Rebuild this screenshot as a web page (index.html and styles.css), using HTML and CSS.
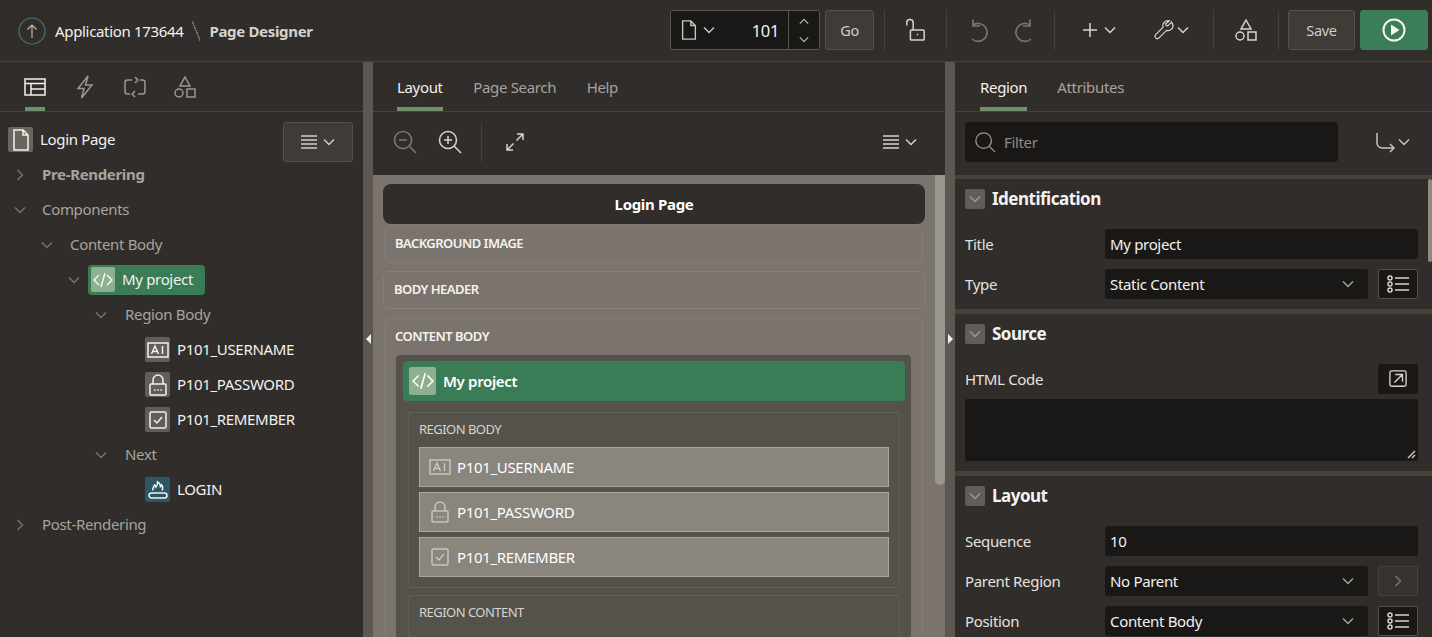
FILE: index.html
```html
<!DOCTYPE html>
<html lang="en">
<head>
  <meta charset="UTF-8" />
  <title>Page Designer</title>
  <link rel="stylesheet" href="styles.css">
</head>
<body>
  <svg class="defs" width="0" height="0">
    <symbol id="chev" viewBox="0 0 12 8"><path d="M1 1.500 6 6.500 11 1.500"/></symbol>
    <symbol id="chev-r" viewBox="0 0 8 12"><path d="M1.500 1 6.500 6 1.500 11"/></symbol>
    <symbol id="lines" viewBox="0 0 16 14"><path d="M0 1h16M0 5h16M0 9h16M0 13h16"/></symbol>
    <symbol id="doc" viewBox="0 0 16 22"><path d="M1 1h9l5 5v15H1zM10 1v5h5"/></symbol>
    <symbol id="shapes" viewBox="0 0 22 22"><path d="M11 1 16 10H6zM13 13h8v8h-8z"/><circle cx="5" cy="17" r="4"/></symbol>
    <symbol id="code" viewBox="0 0 20 16"><path d="M6 3 1 8l5 5M14 3l5 5-5 5M12 1 8 15"/></symbol>
    <symbol id="text-item" viewBox="0 0 22 18"><path d="M1 2h20v14H1z"/><path d="M4.500 13 8 5l3.500 8M5.700 10.500h4.600M15.500 5v8"/></symbol>
    <symbol id="lock-item" viewBox="0 0 18 22"><path d="M2 10h14a1 1 0 0 1 1 1v9a1 1 0 0 1-1 1H2a1 1 0 0 1-1-1v-9a1 1 0 0 1 1-1zM4 10V6a5 5 0 0 1 10 0v4M5 16h1.500M8.300 16h1.500M11.500 16h1.500"/></symbol>
    <symbol id="check-item" viewBox="0 0 18 18"><path d="M2.500 1h13A1.500 1.500 0 0 1 17 2.500v13a1.500 1.500 0 0 1-1.500 1.500h-13A1.500 1.500 0 0 1 1 15.500v-13A1.500 1.500 0 0 1 2.500 1zM5 9l3 3 5-6"/></symbol>
    <symbol id="list" viewBox="0 0 22 18"><circle cx="3" cy="3" r="2"/><circle cx="3" cy="9" r="2"/><circle cx="3" cy="15" r="2"/><path d="M8 3h14M8 9h14M8 15h14"/></symbol>
  </svg>

  <header class="topbar">
    <div class="crumbs">
      <svg class="up-icon" width="28" height="28" viewBox="0 0 28 28"><circle class="up-ring" cx="14" cy="14" r="13"/><path class="up-arrow" d="M14 21V8M9.500 12.500 14 8l4.500 4.500"/></svg>
      <span class="crumb">Application 173644</span>
      <span class="crumb-sep"></span>
      <span class="crumb-now">Page Designer</span>
    </div>
    <div class="tools">
      <div class="page-picker">
        <svg class="ic-doc" width="16" height="20"><use href="#doc"/></svg>
        <svg class="ic-chev" width="12" height="8"><use href="#chev"/></svg>
        <span class="page-no">101</span>
        <span class="stepper">
          <svg class="ic-chev flip" width="10" height="7"><use href="#chev"/></svg>
          <svg class="ic-chev" width="10" height="7"><use href="#chev"/></svg>
        </span>
      </div>
      <button class="btn btn-go">Go</button>
      <span class="vsep sep-a"></span>
      <svg class="tool-lock" width="22" height="24" viewBox="0 0 24 26"><path d="M8 13h13a1 1 0 0 1 1 1v9a1 1 0 0 1-1 1H8a1 1 0 0 1-1-1v-9a1 1 0 0 1 1-1zM3 8V5a3.500 3.500 0 0 1 7 0v8"/><path d="M14 18h1.500"/></svg>
      <span class="vsep sep-b"></span>
      <svg class="tool-dim undo" width="22" height="24" viewBox="0 0 22 24"><path d="M6 7a9 9 0 1 1-1 14M6 1.500V8h7"/></svg>
      <svg class="tool-dim redo" width="22" height="24" viewBox="0 0 22 24"><path d="M16 7a9 9 0 1 0 1 14M16 1.500V8H9"/></svg>
      <span class="vsep sep-c"></span>
      <span class="tool-group plus">
        <svg width="16" height="16" viewBox="0 0 16 16"><path d="M8 1v14M1 8h14"/></svg>
        <svg class="ic-chev" width="12" height="8"><use href="#chev"/></svg>
      </span>
      <span class="tool-group wrench">
        <svg width="20" height="20" viewBox="0 0 24 24"><path d="M21 2.500 16.500 7l-2-.5-.5-2L18.500 1a6 6 0 0 0-7.500 7.500L2 17.500a2.800 2.800 0 0 0 4 4l9-9A6 6 0 0 0 22.500 5z"/></svg>
        <svg class="ic-chev" width="12" height="8"><use href="#chev"/></svg>
      </span>
      <span class="vsep sep-d"></span>
      <svg class="tool-shapes" width="22" height="22"><use href="#shapes"/></svg>
      <span class="vsep sep-e"></span>
      <button class="btn btn-save">Save</button>
      <button class="btn btn-run"><svg width="24" height="24" viewBox="0 0 24 24"><circle cx="12" cy="12" r="10.500"/><path class="run-tri" d="M9 6.500 17.500 12 9 17.500z"/></svg></button>
    </div>
  </header>

  <main class="designer">
    <section class="pane pane-left">
      <nav class="tabs tabs-icons">
        <span class="icon-tab active"><svg width="22" height="18" viewBox="0 0 22 18"><path d="M1 1h20v16H1zM1 5.500h20M7 5.500V17M7 11h14"/></svg></span>
        <span class="icon-tab"><svg width="18" height="24" viewBox="0 0 18 24"><path d="M12 1 2 13.500h6L5.500 23 16 10h-6.500z"/></svg></span>
        <span class="icon-tab"><svg width="24" height="22" viewBox="0 0 24 22"><path d="M9 4H4.500A2.500 2.500 0 0 0 2 6.500v9A2.500 2.500 0 0 0 4.500 18H7M15 18h4.500a2.500 2.500 0 0 0 2.500-2.500v-9A2.500 2.500 0 0 0 19.500 4H17M12 1 15 4 12 7M12 15 9 18 12 21"/></svg></span>
        <span class="icon-tab"><svg width="22" height="22"><use href="#shapes"/></svg></span>
      </nav>
      <div class="tree">
        <div class="tree-row root">
          <span class="node-icon page-icon"><svg width="16" height="22"><use href="#doc"/></svg></span>
          <span class="tree-text strong-white">Login Page</span>
          <button class="btn menu-btn">
            <svg width="16" height="14"><use href="#lines"/></svg>
            <svg class="ic-chev" width="12" height="8"><use href="#chev"/></svg>
          </button>
        </div>
        <div class="tree-row lvl-0"><svg class="toggle" width="8" height="12"><use href="#chev-r"/></svg><span class="tree-text bold">Pre-Rendering</span></div>
        <div class="tree-row lvl-0"><svg class="toggle" width="12" height="8"><use href="#chev"/></svg><span class="tree-text">Components</span></div>
        <div class="tree-row lvl-1"><svg class="toggle" width="12" height="8"><use href="#chev"/></svg><span class="tree-text">Content Body</span></div>
        <div class="tree-row lvl-2">
          <svg class="toggle" width="12" height="8"><use href="#chev"/></svg>
          <span class="pill"><span class="pill-icon"><svg width="20" height="16"><use href="#code"/></svg></span><span class="tree-text strong-white">My project</span></span>
        </div>
        <div class="tree-row lvl-3"><svg class="toggle" width="12" height="8"><use href="#chev"/></svg><span class="tree-text">Region Body</span></div>
        <div class="tree-row leaf">
          <span class="node-icon"><svg width="22" height="18"><use href="#text-item"/></svg></span><span class="tree-text strong-white">P101_USERNAME</span>
        </div>
        <div class="tree-row leaf">
          <span class="node-icon"><svg width="18" height="22"><use href="#lock-item"/></svg></span><span class="tree-text strong-white">P101_PASSWORD</span>
        </div>
        <div class="tree-row leaf">
          <span class="node-icon"><svg width="18" height="18"><use href="#check-item"/></svg></span><span class="tree-text strong-white">P101_REMEMBER</span>
        </div>
        <div class="tree-row lvl-3"><svg class="toggle" width="12" height="8"><use href="#chev"/></svg><span class="tree-text">Next</span></div>
        <div class="tree-row leaf">
          <span class="node-icon teal"><svg width="20" height="20" viewBox="0 0 20 20"><path d="M3.500 13h13a2.500 2.500 0 0 1 0 5h-13a2.500 2.500 0 0 1 0-5zM5 10.500C4 8 6 7 6.500 5c1 .5 1.500 1 1.500 2C9 6 9.500 4 9.500 2c2 1 3 3 3 4.500.5-.5 1-1 1.200-1.500 1 1.500 1.500 3.500.3 5.500"/></svg></span><span class="tree-text strong-white">LOGIN</span>
        </div>
        <div class="tree-row lvl-0"><svg class="toggle" width="8" height="12"><use href="#chev-r"/></svg><span class="tree-text">Post-Rendering</span></div>
      </div>
    </section>

    <div class="splitter"><span class="handle handle-left"></span></div>

    <section class="pane pane-center">
      <nav class="tabs text-tabs center-tabs">
        <span class="text-tab active">Layout</span>
        <span class="text-tab">Page Search</span>
        <span class="text-tab">Help</span>
      </nav>
      <div class="center-tools">
        <svg class="tool-dim" width="24" height="24" viewBox="0 0 24 24"><circle cx="10" cy="10" r="8.500"/><path d="M16 16l7 7M6 10h8"/></svg>
        <svg class="zoom-in" width="24" height="24" viewBox="0 0 24 24"><circle cx="10" cy="10" r="8.500"/><path d="M16 16l7 7M6 10h8M10 6v8"/></svg>
        <span class="vsep tall"></span>
        <svg class="expand" width="20" height="20" viewBox="0 0 20 20"><path d="M12 2h6v6M18 2l-6.500 6.500M2 12v6h6M2 18l6.500-6.500"/></svg>
        <span class="center-menu">
          <svg width="16" height="14"><use href="#lines"/></svg>
          <svg class="ic-chev" width="12" height="8"><use href="#chev"/></svg>
        </span>
      </div>
      <div class="canvas">
        <div class="canvas-inner">
          <div class="page-title">Login Page</div>
          <div class="slot slot-bg">BACKGROUND IMAGE</div>
          <div class="slot slot-header">BODY HEADER</div>
          <div class="slot slot-content">
            <div class="slot-label">CONTENT BODY</div>
            <div class="region">
              <div class="region-head"><span class="region-icon"><svg width="22" height="18"><use href="#code"/></svg></span>My project</div>
              <div class="sub-slot">
                <div class="sub-label">REGION BODY</div>
                <div class="item"><svg width="22" height="18"><use href="#text-item"/></svg><span>P101_USERNAME</span></div>
                <div class="item"><svg width="18" height="22"><use href="#lock-item"/></svg><span>P101_PASSWORD</span></div>
                <div class="item"><svg width="18" height="18"><use href="#check-item"/></svg><span>P101_REMEMBER</span></div>
              </div>
              <div class="sub-slot sub-content">
                <div class="sub-label">REGION CONTENT</div>
              </div>
            </div>
          </div>
        </div>
        <div class="canvas-scroll"><span class="canvas-thumb"></span></div>
      </div>
    </section>

    <div class="splitter"><span class="handle handle-right"></span></div>

    <section class="pane pane-right">
      <nav class="tabs text-tabs right-tabs">
        <span class="text-tab active">Region</span>
        <span class="text-tab">Attributes</span>
      </nav>
      <div class="filter-row">
        <div class="filter">
          <svg width="22" height="22" viewBox="0 0 24 24"><circle cx="10.500" cy="10.500" r="8.500"/><path d="M16.500 16.500 23 23"/></svg>
          <span>Filter</span>
        </div>
        <span class="filter-go">
          <svg width="20" height="20" viewBox="0 0 20 20"><path d="M2 1v10a5 5 0 0 0 5 5h12M15 12l4 4-4 4"/></svg>
          <svg class="ic-chev" width="12" height="8"><use href="#chev"/></svg>
        </span>
      </div>
      <div class="props">
        <div class="group">
          <h3 class="group-head"><span class="collapse"><svg width="12" height="8"><use href="#chev"/></svg></span><span class="head-text">Identification</span></h3>
          <div class="prop"><label>Title</label><span class="field">My project</span></div>
          <div class="prop"><label>Type</label><span class="field select">Static Content<svg width="12" height="8"><use href="#chev"/></svg></span><span class="side-btn"><svg width="22" height="18"><use href="#list"/></svg></span></div>
        </div>
        <div class="group group-source">
          <h3 class="group-head"><span class="collapse"><svg width="12" height="8"><use href="#chev"/></svg></span><span class="head-text">Source</span></h3>
          <div class="code-label"><label>HTML Code</label><span class="side-btn flat"><svg width="20" height="20" viewBox="0 0 20 20"><path d="M8 1H3a2 2 0 0 0-2 2v13a2 2 0 0 0 2 2h14a2 2 0 0 0 2-2V3a2 2 0 0 0-2-2H8M7 5h8v8M15 5l-9 9"/></svg></span></div>
          <div class="code-area"><svg class="grip" width="9" height="9" viewBox="0 0 9 9"><path d="M1 8 8 1M5 8l3-3"/></svg></div>
        </div>
        <div class="group">
          <h3 class="group-head"><span class="collapse"><svg width="12" height="8"><use href="#chev"/></svg></span><span class="head-text">Layout</span></h3>
          <div class="prop"><label>Sequence</label><span class="field">10</span></div>
          <div class="prop"><label>Parent Region</label><span class="field select">No Parent<svg width="12" height="8"><use href="#chev"/></svg></span><span class="side-btn off"><svg width="8" height="12"><use href="#chev-r"/></svg></span></div>
          <div class="prop"><label>Position</label><span class="field select">Content Body<svg width="12" height="8"><use href="#chev"/></svg></span><span class="side-btn"><svg width="22" height="18"><use href="#list"/></svg></span></div>
        </div>
        <span class="props-thumb"></span>
      </div>
    </section>
  </main>
</body>
</html>
```

FILE: styles.css
```css
* { box-sizing: border-box; }
html, body { height: 100%; }
body {
  margin: 0;
  height: 637px;
  overflow: hidden;
  display: flex;
  flex-direction: column;
  background: #312d2a;
  color: #f0eeeb;
  font-family: "Noto Sans", sans-serif;
  font-size: 15px;
  letter-spacing: -0.33px;
}
svg { display: block; flex: none; fill: none; stroke: currentColor; stroke-width: 1.5; overflow: visible; }
.defs { position: absolute; }
button { font: inherit; letter-spacing: inherit; color: inherit; }

/* top bar */
.topbar {
  height: 62px;
  flex: none;
  display: flex;
  align-items: center;
  justify-content: space-between;
  padding: 0 4px 1px 18px;
  border-bottom: 1px solid #45413c;
}
.crumbs { display: flex; align-items: center; padding-top: 2px; }
.up-icon { stroke-width: 1.2; margin-right: 9px; }
.up-ring { stroke: #4f6f6c; }
.up-arrow { stroke: #c9b9a0; }
.crumb { color: #f3f1ee; }
.crumb-sep { width: 8px; height: 20px; margin: 0 9px 0 9px; background: linear-gradient(to top right, transparent 46%, #6f6a64 46%, #6f6a64 56%, transparent 56%); }
.crumb-now { font-weight: 700; color: #d6d2cd; }
.tools { display: flex; align-items: center; }
.page-picker {
  width: 150px;
  height: 40px;
  display: flex;
  align-items: center;
  background: #1a1816;
  border: 1px solid #5a5650;
  border-radius: 3px;
  padding-left: 10px;
  color: #c9c5c0;
}
.ic-chev { color: inherit; }
.page-picker .ic-chev { margin-left: 6px; }
.page-no { margin-left: auto; margin-right: 9px; color: #f3f1ee; font-size: 16.500px; }
.stepper {
  width: 31px;
  height: 100%;
  display: flex;
  flex-direction: column;
  align-items: center;
  justify-content: center;
  gap: 11px;
  border-left: 1px solid #5a5650;
  color: #b8b4ae;
}
.stepper .ic-chev { margin: 0; }
.flip { transform: rotate(180deg); }
.btn {
  height: 40px;
  border: 1px solid #55514b;
  border-radius: 3px;
  background: #3f3b37;
  color: #d0ccc7;
  padding: 0;
  font-size: 14.500px;
}
.btn-go { width: 49px; margin-left: 5px; }
.vsep { width: 1px; height: 40px; background: #45413c; flex: none; }
.sep-a { margin-left: 10px; }
.tool-lock { margin-left: 19px; color: #d8d4cf; stroke-width: 1.6; }
.sep-b { margin-left: 20px; }
.tool-dim { color: #79746e; stroke-width: 1.7; }
.undo { margin-left: 20px; }
.redo { margin-left: 25px; }
.sep-c { margin-left: 18px; }
.tool-group { display: flex; align-items: center; gap: 6px; color: #d8d4cf; }
.plus { margin-left: 27px; }
.wrench { margin-left: 38px; gap: 3px; }
.sep-d { margin-left: 24px; }
.tool-shapes { margin-left: 21px; color: #d8d4cf; }
.sep-e { margin-left: 21px; }
.btn-save { width: 67px; margin-left: 9px; }
.btn-run {
  width: 68px;
  margin-left: 5px;
  background: #3a7d56;
  border-color: #3a7d56;
  display: flex;
  align-items: center;
  justify-content: center;
  color: #f5f5f0;
}
.btn-run svg { stroke-width: 2; }
.run-tri { fill: #f5f5f0; stroke: none; }

/* panes */
.designer { flex: 1; display: flex; min-height: 0; }
.pane { display: flex; flex-direction: column; min-width: 0; }
.pane-left { width: 363px; }
.pane-center { width: 572px; }
.pane-right { flex: 1; }
.splitter {
  width: 10px;
  flex: none;
  display: flex;
  align-items: center;
  justify-content: center;
  padding-bottom: 22px;
  background: #5c5750;
}
.handle { width: 0; height: 0; border-top: 5px solid transparent; border-bottom: 5px solid transparent; }
.handle-left { border-right: 5px solid #f2f0ed; }
.handle-right { border-left: 5px solid #f2f0ed; }

.tabs { height: 50px; flex: none; display: flex; border-bottom: 1px solid #45413c; }
.tabs-icons { padding-left: 10px; }
.icon-tab {
  width: 50px;
  height: 49px;
  display: flex;
  align-items: center;
  justify-content: center;
  color: #9c978f;
  position: relative;
}
.icon-tab.active { color: #f3f1ee; }
.icon-tab.active::after {
  content: "";
  position: absolute;
  left: 15px;
  right: 15px;
  bottom: 0;
  height: 4px;
  background: #6f8f6d;
}
.text-tabs { padding-left: 24px; gap: 30px; }
.center-tabs { gap: 30.500px; }
.right-tabs { padding-left: 25px; }
.text-tab {
  height: 49px;
  display: flex;
  align-items: center;
  color: #a8a39d;
  position: relative;
}
.text-tab.active { color: #f3f1ee; }
.text-tab.active::after {
  content: "";
  position: absolute;
  left: 0;
  right: 0;
  bottom: 0;
  height: 4px;
  background: #6f8f6d;
}

/* tree */
.tree { padding-top: 10px; }
.tree-row { height: 35px; display: flex; align-items: center; }
.root { padding-left: 8px; gap: 7px; }
.lvl-0 { padding-left: 12px; }
.lvl-1 { padding-left: 39px; }
.lvl-2 { padding-left: 66px; }
.lvl-3 { padding-left: 93px; }
.leaf { padding-left: 145px; gap: 7px; }
.toggle { color: #77726c; margin-right: 17px; margin-left: 2px; }
svg.toggle[width="8"] { margin-left: 4px; margin-right: 18px; }
.lvl-0 .toggle { margin-right: 16px; }
.lvl-3 .toggle { margin-right: 18px; }
.tree-text { color: #a8a39d; padding-bottom: 2px; }
.tree-text.bold { font-weight: 700; }
.tree-text.strong-white { color: #f3f1ee; }
.node-icon {
  width: 25px;
  height: 25px;
  display: flex;
  align-items: center;
  justify-content: center;
  border-radius: 2px;
  background: #625d58;
  color: #f3f1ee;
}
.page-icon { background: #6a655f; }
.node-icon.teal { background: #2c5766; }
.menu-btn {
  width: 70px;
  margin: 5px 10px 0 auto;
  display: flex;
  align-items: center;
  justify-content: center;
  gap: 6px;
}
.pill {
  width: 117px;
  height: 30px;
  margin-left: -9px;
  display: flex;
  align-items: center;
  gap: 7px;
  padding-left: 3px;
  background: #397c55;
  border-radius: 4px;
  color: #f5f5f0;
}
.pill-icon {
  width: 24px;
  height: 25px;
  display: flex;
  align-items: center;
  justify-content: center;
  background: #8db08f;
  border-radius: 2px;
}

/* center */
.center-tools {
  height: 63px;
  flex: none;
  display: flex;
  align-items: center;
  padding: 0 28px 3px 20px;
  color: #d8d4cf;
}
.zoom-in { margin-left: 21px; }
.tall { margin-left: 19px; }
.expand { margin-left: 23px; }
.center-menu { margin-left: auto; display: flex; align-items: center; gap: 6px; }
.canvas { flex: 1; min-height: 0; display: flex; background: #7b736e; overflow: hidden; }
.canvas-inner {
  flex: 1;
  min-width: 0;
  padding: 9px 10px 0;
  font-size: 13px;
  letter-spacing: -0.53px;
  display: flex;
  flex-direction: column;
  align-items: stretch;
}
.page-title {
  height: 40px;
  flex: none;
  display: flex;
  align-items: center;
  justify-content: center;
  background: #312d2a;
  border-radius: 8px;
  color: #fff;
  font-size: 15px;
  letter-spacing: -0.33px;
  font-weight: 700;
}
.slot { flex: none; border: 1px dotted #8e8781; border-radius: 6px; font-weight: 600; color: #f5f3f0; }
.slot-bg { height: 38px; margin: 1px 2px 0; padding: 8px 9px 0; }
.slot-header { height: 38px; margin-top: 8px; padding: 8px 10px 0; border-style: solid; border-color: #877f79; }
.slot-content { flex: none; height: 330px; margin: 9px 2px 0; padding: 8px 11px 0 10px; }
.slot-label { height: 28px; margin-left: -1px; }
.region { background: #55514b; border-radius: 4px; padding: 6px 6px 0 7px; }
.region-head {
  height: 40px;
  display: flex;
  align-items: center;
  gap: 7px;
  padding-left: 6px;
  background: #397c55;
  border-radius: 4px;
  font-size: 15px;
  letter-spacing: -0.33px;
  color: #fff;
}
.region-icon {
  width: 27px;
  height: 28px;
  display: flex;
  align-items: center;
  justify-content: center;
  background: #8db08f;
  border-radius: 2px;
}
.sub-slot {
  margin: 11px 5px 0;
  height: 176px;
  padding: 7px 10px 0;
  border: 1px dotted #6f6a64;
  border-radius: 2px;
  font-weight: 400;
  color: #d8d4cf;
}
.sub-content { margin-top: 7px; height: 60px; }
.sub-label { height: 27px; }
.item {
  height: 40px;
  margin-bottom: 5px;
  display: flex;
  align-items: center;
  padding-left: 9px;
  background: #8a857d;
  border: 1px solid #aaa69f;
  color: #fff;
  font-size: 15px;
  letter-spacing: -0.33px;
  font-weight: 400;
}
.item svg { color: #c9c5bf; }
.item svg[width="18"] { margin: 0 2px 0 2px; }
.item span { margin-left: 6px; padding-bottom: 1px; }
.canvas-scroll { width: 10px; flex: none; }
.canvas-thumb { display: block; width: 10px; height: 310px; background: #9b9590; border-radius: 0 0 5px 5px; }

/* right */
.filter-row { height: 60px; flex: none; display: flex; align-items: center; padding: 0 22px 0 10px; margin-bottom: 3px; }
.filter {
  width: 373px;
  height: 40px;
  display: flex;
  align-items: center;
  gap: 8px;
  padding-left: 9px;
  background: #1a1816;
  border-radius: 4px;
  color: #8f8a84;
}
.filter svg { color: #9c978f; stroke-width: 1.4; }
.filter-go { margin-left: auto; display: flex; align-items: center; gap: 3px; color: #c9c5c0; }
.props { flex: 1; min-height: 0; position: relative; overflow: hidden; border-top: 4px solid #45413c; }
.group { padding: 0 14px 10px 10px; border-bottom: 5px solid #45413c; }
.group-source { height: 162px; }
.group-head {
  height: 40px;
  margin: 0 0 10px;
  display: flex;
  align-items: center;
  font-size: 17px;
  font-weight: 700;
  color: #f5f3f0;
  letter-spacing: -0.5px;
}
.head-text { padding-bottom: 2px; }
.collapse {
  width: 20px;
  height: 20px;
  margin-right: 7px;
  display: flex;
  align-items: center;
  justify-content: center;
  background: #625d58;
  border-radius: 2px;
  color: #9c978f;
}
.prop { height: 30px; display: flex; align-items: center; margin-bottom: 10px; }
.group .prop:last-child { margin-bottom: 0; }
.prop label { width: 140px; flex: none; color: #e6e3df; }
.field {
  flex: 1;
  height: 30px;
  display: flex;
  align-items: center;
  justify-content: space-between;
  padding: 0 14px 0 5px;
  background: #1a1816;
  border-radius: 3px;
  color: #f3f1ee;
}
.field svg { color: #a8a39d; }
.side-btn {
  width: 40px;
  height: 30px;
  flex: none;
  margin-left: 10px;
  display: flex;
  align-items: center;
  justify-content: center;
  background: #1a1816;
  border: 1px solid #55514b;
  border-radius: 2px;
  color: #d8d4cf;
}
.side-btn.off { background: #36322f; color: #79746e; border-color: #45413c; }
.side-btn.flat { border: 0; border-radius: 3px; }
.code-label { display: flex; align-items: center; justify-content: space-between; height: 30px; }
.code-label label { color: #e6e3df; }
.code-label .side-btn svg { width: 18px; height: 18px; }
.code-area { height: 62px; margin-top: 5px; background: #1a1816; border-radius: 3px; display: flex; align-items: flex-end; justify-content: flex-end; padding: 0 2px 2px 0; color: #c9c5c0; }
.props-thumb { position: absolute; right: 0; top: 0; width: 4px; height: 83px; background: #8f8a84; border-radius: 2px; }
```
